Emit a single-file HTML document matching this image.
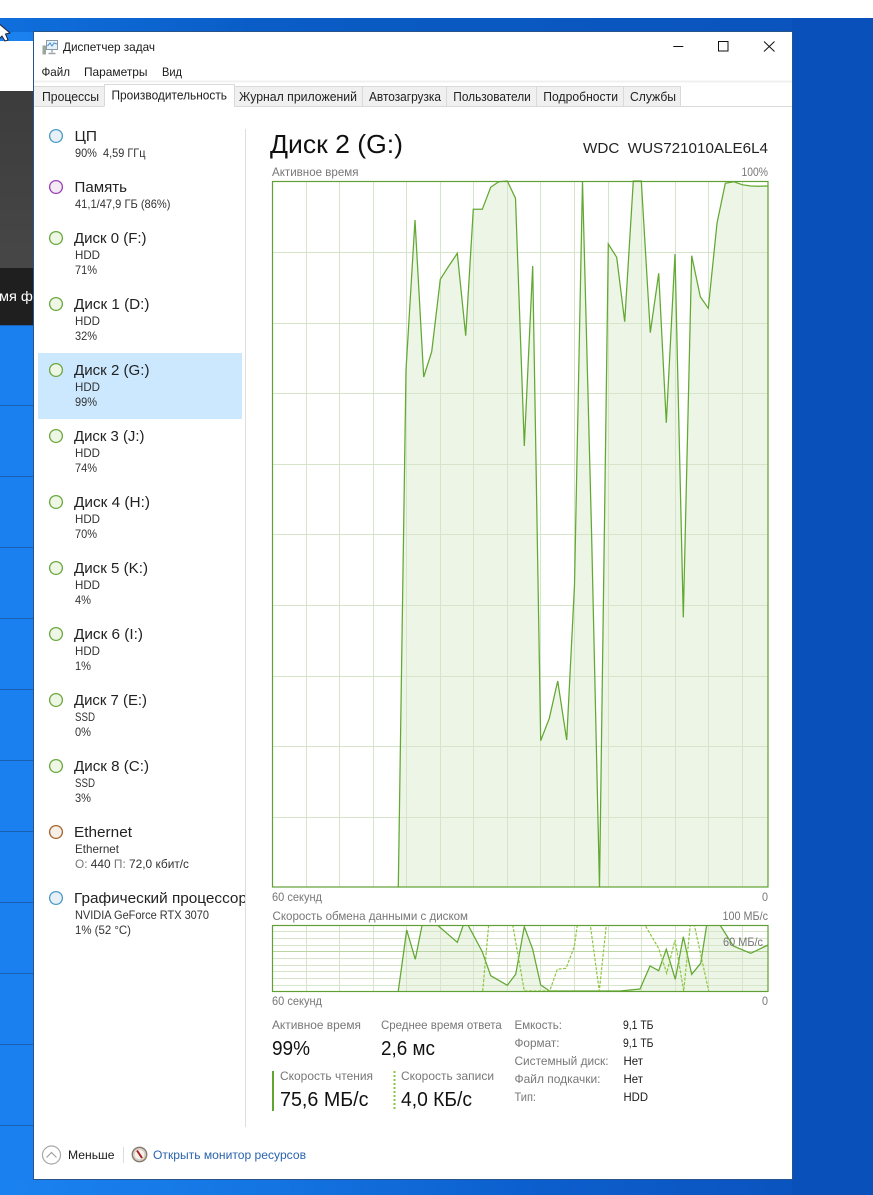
<!DOCTYPE html>
<html lang="ru"><head><meta charset="utf-8"><title>Диспетчер задач</title>
<style>
html,body{margin:0;padding:0;background:#fff;width:873px;height:1195px;overflow:hidden}
svg{display:block;position:absolute;left:0;top:0}
text{font-family:"Liberation Sans",sans-serif;white-space:pre;fill:#1a1a1a;font-size:12px}
.g{fill:#777}
.n{font-size:14.5px;fill:#222}
.s{font-size:12px;fill:#333}
.b{font-size:20.5px;fill:#111}
.m{fill:#222;font-size:12.5px}
</style></head><body>
<svg width="873" height="1195" viewBox="0 0 873 1195" xmlns="http://www.w3.org/2000/svg">
<defs>
<linearGradient id="desk" x1="0" y1="0" x2="1" y2="0"><stop offset="0" stop-color="#1a82f0"/><stop offset=".3" stop-color="#1475e2"/><stop offset=".6" stop-color="#0c5fce"/><stop offset="1" stop-color="#0a50ba"/></linearGradient>
<linearGradient id="top" x1="0" y1="0" x2="1" y2="0"><stop offset="0" stop-color="#0f6fdc"/><stop offset=".3" stop-color="#0a5cc6"/><stop offset="1" stop-color="#0a52bb"/></linearGradient>
<linearGradient id="dk" x1="0" y1="0" x2="0" y2="1"><stop offset="0" stop-color="#3c3c3c"/><stop offset="1" stop-color="#474747"/></linearGradient>
<clipPath id="c2"><rect x="273" y="925.5" width="495" height="66"/></clipPath>
<clipPath id="cs"><rect x="38" y="880" width="207" height="40"/></clipPath>
</defs>

<!-- desktop -->
<rect width="873" height="1195" fill="#fff"/>
<rect y="18" width="873" height="1177" fill="url(#desk)"/>
<rect y="18" width="873" height="14" fill="url(#top)"/>
<rect x="792" y="18" width="81" height="1177" fill="#0a50ba"/>
<rect x="792" y="1180" width="81" height="15" fill="#0a50ba"/>
<!-- background app strip -->
<rect y="41" width="34" height="50" fill="#fff"/>
<rect y="91" width="34" height="177" fill="url(#dk)"/>
<rect y="268" width="34" height="57" fill="#1f1f1f"/>
<rect y="325" width="34" height="855" fill="#1a80f0"/>
<g stroke="#1a5fb0" stroke-width="1"><path d="M0 325.5H34M0 405.5H34M0 476.5H34M0 547.5H34M0 618.5H34M0 689.5H34M0 760.5H34M0 831.5H34M0 902.5H34M0 973.5H34M0 1044.5H34M0 1125.5H34"/></g>
<text x="-1" y="301" textLength="42" lengthAdjust="spacingAndGlyphs" style="fill:#fff;font-size:14px">мя фа</text>
<path d="M-3 22L10 33L5.5 34L8 40L5 41L2 36L-1 39Z" fill="#fff" stroke="#223" stroke-width="1"/>

<!-- window -->
<rect x="33.5" y="31.5" width="759" height="1148" fill="#fff" stroke="#27548a"/>

<!-- title bar -->
<g>
<rect x="42.5" y="45.5" width="3.5" height="9" fill="#9aa79a"/>
<rect x="46.5" y="40.5" width="11" height="9" fill="#e6f1fa" stroke="#8a9aa8"/>
<path d="M47.5 46L50 43L52 46L54 43L57 44" fill="none" stroke="#4a8ed0" stroke-width="1"/>
<path d="M52 50V52.5M48.5 53.5H55.5" stroke="#9aa6ae" stroke-width="1.4" fill="none"/>
</g>
<text x="63" y="51" textLength="92" lengthAdjust="spacingAndGlyphs" font-size="12">Диспетчер задач</text>
<path d="M673.3 46.5H683.3" stroke="#111" stroke-width="1"/>
<rect x="718.5" y="41.5" width="9.5" height="9.5" fill="none" stroke="#111"/>
<path d="M764 41.5L774.5 51.5M774.5 41.5L764 51.5" stroke="#111" stroke-width="1"/>

<!-- menu -->
<text x="41.5" y="76" textLength="28.5" lengthAdjust="spacingAndGlyphs">Файл</text>
<text x="84" y="76" textLength="63.5" lengthAdjust="spacingAndGlyphs">Параметры</text>
<text x="162" y="76" textLength="20" lengthAdjust="spacingAndGlyphs">Вид</text>
<rect x="34" y="80.5" width="758" height="2" fill="#f0f0f0"/>

<!-- tabs -->
<rect x="34" y="86" width="646" height="20" fill="#f0f0f0"/>
<g stroke="#d9d9d9" fill="none">
<path d="M34 86.5H680.5V106M362.5 86V106M446.5 86V106M536.5 86V106M623.5 86V106"/>
<path d="M34 106.5H792"/>
</g>
<rect x="104" y="84.5" width="130.5" height="23" fill="#fff"/>
<path d="M104.5 106.5V84.5H234.5V106.5" fill="none" stroke="#d9d9d9"/>
<text class="m" x="42" y="101" textLength="57" lengthAdjust="spacingAndGlyphs">Процессы</text>
<text class="m" x="111.5" y="99.5" textLength="115.5" lengthAdjust="spacingAndGlyphs">Производительность</text>
<text class="m" x="239" y="101" textLength="118" lengthAdjust="spacingAndGlyphs">Журнал приложений</text>
<text class="m" x="369" y="101" textLength="72" lengthAdjust="spacingAndGlyphs">Автозагрузка</text>
<text class="m" x="453.3" y="101" textLength="77.5" lengthAdjust="spacingAndGlyphs">Пользователи</text>
<text class="m" x="543.3" y="101" textLength="74.7" lengthAdjust="spacingAndGlyphs">Подробности</text>
<text class="m" x="630" y="101" textLength="46" lengthAdjust="spacingAndGlyphs">Службы</text>

<!-- sidebar -->
<rect x="38" y="353" width="204" height="66" fill="#cce8ff"/>
<path d="M245.5 129V1127" stroke="#dedede"/>
<g stroke-width="1.3">
<circle cx="56" cy="136" r="6.4" fill="#e6f0f6" stroke="#4c9ac6"/>
<circle cx="56" cy="187" r="6.4" fill="#f4eaf6" stroke="#9a3fb3"/>
<g fill="#eef6e6" stroke="#6aa83c">
<circle cx="56" cy="238" r="6.4"/><circle cx="56" cy="304" r="6.4"/><circle cx="56" cy="370" r="6.4"/><circle cx="56" cy="436" r="6.4"/><circle cx="56" cy="502" r="6.4"/><circle cx="56" cy="568" r="6.4"/><circle cx="56" cy="634" r="6.4"/><circle cx="56" cy="700" r="6.4"/><circle cx="56" cy="766" r="6.4"/>
</g>
<circle cx="56" cy="832" r="6.4" fill="#f6efe8" stroke="#a7622a"/>
<circle cx="56" cy="898" r="6.4" fill="#e6f0f6" stroke="#4c9ac6"/>
</g>

<text class="n" x="74.5" y="141" textLength="22.5" lengthAdjust="spacingAndGlyphs">ЦП</text>
<text class="s" x="75" y="157" textLength="70.5" lengthAdjust="spacingAndGlyphs">90%  4,59 ГГц</text>
<text class="n" x="74.5" y="192" textLength="52.5" lengthAdjust="spacingAndGlyphs">Память</text>
<text class="s" x="75" y="208" textLength="95.5" lengthAdjust="spacingAndGlyphs">41,1/47,9 ГБ (86%)</text>

<text class="n" x="74" y="243" textLength="72.5" lengthAdjust="spacingAndGlyphs">Диск 0 (F:)</text>
<text class="s" x="75" y="259" textLength="25" lengthAdjust="spacingAndGlyphs">HDD</text>
<text class="s" x="75" y="274" textLength="22" lengthAdjust="spacingAndGlyphs">71%</text>

<text class="n" x="74" y="309" textLength="75.5" lengthAdjust="spacingAndGlyphs">Диск 1 (D:)</text>
<text class="s" x="75" y="325" textLength="25" lengthAdjust="spacingAndGlyphs">HDD</text>
<text class="s" x="75" y="340" textLength="22" lengthAdjust="spacingAndGlyphs">32%</text>

<text class="n" x="74" y="375" textLength="75.5" lengthAdjust="spacingAndGlyphs">Диск 2 (G:)</text>
<text class="s" x="75" y="391" textLength="25" lengthAdjust="spacingAndGlyphs">HDD</text>
<text class="s" x="75" y="406" textLength="22" lengthAdjust="spacingAndGlyphs">99%</text>

<text class="n" x="74" y="441" textLength="70.5" lengthAdjust="spacingAndGlyphs">Диск 3 (J:)</text>
<text class="s" x="75" y="457" textLength="25" lengthAdjust="spacingAndGlyphs">HDD</text>
<text class="s" x="75" y="472" textLength="22" lengthAdjust="spacingAndGlyphs">74%</text>

<text class="n" x="74" y="507" textLength="76" lengthAdjust="spacingAndGlyphs">Диск 4 (H:)</text>
<text class="s" x="75" y="523" textLength="25" lengthAdjust="spacingAndGlyphs">HDD</text>
<text class="s" x="75" y="538" textLength="22" lengthAdjust="spacingAndGlyphs">70%</text>

<text class="n" x="74" y="573" textLength="74" lengthAdjust="spacingAndGlyphs">Диск 5 (K:)</text>
<text class="s" x="75" y="589" textLength="25" lengthAdjust="spacingAndGlyphs">HDD</text>
<text class="s" x="75" y="604" textLength="16" lengthAdjust="spacingAndGlyphs">4%</text>

<text class="n" x="74" y="639" textLength="69" lengthAdjust="spacingAndGlyphs">Диск 6 (I:)</text>
<text class="s" x="75" y="655" textLength="25" lengthAdjust="spacingAndGlyphs">HDD</text>
<text class="s" x="75" y="670" textLength="16" lengthAdjust="spacingAndGlyphs">1%</text>

<text class="n" x="74" y="705" textLength="73" lengthAdjust="spacingAndGlyphs">Диск 7 (E:)</text>
<text class="s" x="75" y="721" textLength="20" lengthAdjust="spacingAndGlyphs">SSD</text>
<text class="s" x="75" y="736" textLength="16" lengthAdjust="spacingAndGlyphs">0%</text>

<text class="n" x="74" y="771" textLength="75" lengthAdjust="spacingAndGlyphs">Диск 8 (C:)</text>
<text class="s" x="75" y="787" textLength="20" lengthAdjust="spacingAndGlyphs">SSD</text>
<text class="s" x="75" y="802" textLength="16" lengthAdjust="spacingAndGlyphs">3%</text>

<text class="n" x="74" y="837" textLength="58" lengthAdjust="spacingAndGlyphs">Ethernet</text>
<text class="s" x="75" y="853" textLength="44" lengthAdjust="spacingAndGlyphs">Ethernet</text>
<text class="s" x="75" y="868" textLength="114" lengthAdjust="spacingAndGlyphs"><tspan style="fill:#777">О:</tspan> 440 <tspan style="fill:#777">П:</tspan> 72,0 кбит/с</text>

<g clip-path="url(#cs)"><text class="n" x="74" y="903" textLength="173" lengthAdjust="spacingAndGlyphs">Графический процессор</text></g>
<text class="s" x="75" y="919" textLength="134" lengthAdjust="spacingAndGlyphs">NVIDIA GeForce RTX 3070</text>
<text class="s" x="75" y="934" textLength="56" lengthAdjust="spacingAndGlyphs">1% (52 °C)</text>

<!-- header -->
<text x="270" y="153" textLength="133" lengthAdjust="spacingAndGlyphs" style="font-size:26px;fill:#111">Диск 2 (G:)</text>
<text x="583" y="153" textLength="185" lengthAdjust="spacingAndGlyphs" style="font-size:15px;fill:#222">WDC  WUS721010ALE6L4</text>
<text class="g" x="272" y="176" textLength="86.5" lengthAdjust="spacingAndGlyphs" font-size="11">Активное время</text>
<text class="g" x="741.5" y="176" textLength="26.5" lengthAdjust="spacingAndGlyphs">100%</text>

<!-- main chart -->
<polygon fill="#ecf5e6" points="398.3,887 406,370 415,220 423.7,377 431.7,351.7 440.3,279.3 448.8,266 457.3,253.3 465.7,335.7 473.3,209.3 482.3,209.3 490.7,187.3 498.7,181.7 507.3,181 515.5,198.3 524.3,446 532.7,266 540.7,740.7 549.3,718.3 557.7,681 566.7,740 574.5,585 582.5,181 591.5,530 599.5,887 608.3,244 616.7,257.3 624.7,321.7 633.3,181 641.3,181 650.3,332.7 658.7,273.3 666.3,422.7 675,254 683.3,617.3 691.7,255.7 700.3,296.7 708.3,308.3 717,223.3 725.3,183.3 733.7,181.7 742,184.7 750.7,186 758.3,186.3 767.5,186 767.5,887"/>
<path stroke="#d6e5c9" fill="none" d="M306.5 181V887M339.5 181V887M373.5 181V887M406.5 181V887M440.5 181V887M473.5 181V887M507.5 181V887M540.5 181V887M574.5 181V887M608.5 181V887M641.5 181V887M675.5 181V887M708.5 181V887M742.5 181V887M273 252.5H768M273 323.5H768M273 393.5H768M273 464.5H768M273 534.5H768M273 605.5H768M273 676.5H768M273 746.5H768M273 817.5H768"/>
<polyline fill="none" stroke="#62a832" stroke-width="1.25" points="398.3,887 406,370 415,220 423.7,377 431.7,351.7 440.3,279.3 448.8,266 457.3,253.3 465.7,335.7 473.3,209.3 482.3,209.3 490.7,187.3 498.7,181.7 507.3,181 515.5,198.3 524.3,446 532.7,266 540.7,740.7 549.3,718.3 557.7,681 566.7,740 574.5,585 582.5,181 591.5,530 599.5,887 608.3,244 616.7,257.3 624.7,321.7 633.3,181 641.3,181 650.3,332.7 658.7,273.3 666.3,422.7 675,254 683.3,617.3 691.7,255.7 700.3,296.7 708.3,308.3 717,223.3 725.3,183.3 733.7,181.7 742,184.7 750.7,186 758.3,186.3 767.5,186"/>
<rect x="272.5" y="181.5" width="495.5" height="705.5" fill="none" stroke="#5f9f33" stroke-width="1.2"/>

<text class="g" x="272" y="901" textLength="50" lengthAdjust="spacingAndGlyphs">60 секунд</text>
<text class="g" x="762" y="901" textLength="6" lengthAdjust="spacingAndGlyphs">0</text>
<text class="g" x="272.5" y="920" textLength="195.5" lengthAdjust="spacingAndGlyphs">Скорость обмена данными с диском</text>
<text class="g" x="722.5" y="920" textLength="45.5" lengthAdjust="spacingAndGlyphs">100 МБ/с</text>

<!-- transfer chart -->
<g clip-path="url(#c2)">
<polygon fill="#ecf5e6" points="398.3,991 406.7,930 415.3,959.3 423.7,917 432,917 437.3,925 457.3,942.3 463.3,925 468,925 482.3,951.7 490.7,975.7 507.3,985.3 515.7,974.3 524.3,926.7 532.7,949.3 540.7,985 549.7,991 620,991 630,990 640,989 650,966 658.7,970.7 666.3,949.3 675.3,979.3 683.3,936.7 691.7,974.3 700.7,963.3 706.7,925 720,925 733.3,946 750.7,953.3 768,945 768,991"/>
<path stroke="#d6e5c9" fill="none" d="M306.5 925V991M339.5 925V991M373.5 925V991M406.5 925V991M440.5 925V991M473.5 925V991M507.5 925V991M540.5 925V991M574.5 925V991M608.5 925V991M641.5 925V991M675.5 925V991M708.5 925V991M742.5 925V991M273 931.5H768M273 938.5H768M273 945.5H768M273 958.5H768M273 965.5H768M273 971.5H768M273 978.5H768M273 985.5H768"/>
<path stroke="#b9d6a2" fill="none" d="M273 951.5H768"/>
<polyline fill="none" stroke="#62a832" stroke-width="1.25" points="398.3,991 406.7,930 415.3,959.3 423.7,917 432,917 437.3,925 457.3,942.3 463.3,925 468,925 482.3,951.7 490.7,975.7 507.3,985.3 515.7,974.3 524.3,926.7 532.7,949.3 540.7,985 549.7,991 620,991 630,990 640,989 650,966 658.7,970.7 666.3,949.3 675.3,979.3 683.3,936.7 691.7,974.3 700.7,963.3 706.7,925 720,925 733.3,946 750.7,953.3 768,945"/>
<polyline fill="none" stroke="#8ec63f" stroke-width="1.2" stroke-dasharray="3 1.5" points="482.7,991 488.7,925 512.7,925 524.3,991 549.7,991 557.3,969.3 566,968.3 574.3,946.7 577.3,925 590.3,925 599.3,991 606.3,925 645,925 653.3,939.3 658.7,948.3 666.7,973.3 675,940 683.7,991 690.3,925 694.3,925 708.7,991"/>
</g>
<rect x="272.5" y="925.5" width="495.5" height="66" fill="none" stroke="#5f9f33" stroke-width="1.2"/>
<text class="g" x="723" y="946" textLength="40" lengthAdjust="spacingAndGlyphs">60 МБ/с</text>
<text class="g" x="272" y="1005" textLength="50" lengthAdjust="spacingAndGlyphs">60 секунд</text>
<text class="g" x="762" y="1005" textLength="6" lengthAdjust="spacingAndGlyphs">0</text>

<!-- stats -->
<text class="g" x="272" y="1029" textLength="89" lengthAdjust="spacingAndGlyphs">Активное время</text>
<text class="g" x="381" y="1029" textLength="120.7" lengthAdjust="spacingAndGlyphs">Среднее время ответа</text>
<text class="b" x="272" y="1055" textLength="38" lengthAdjust="spacingAndGlyphs">99%</text>
<text class="b" x="381" y="1055" textLength="54" lengthAdjust="spacingAndGlyphs">2,6 мс</text>
<rect x="272" y="1071" width="2" height="40" fill="#5fa52e"/>
<path d="M394.5 1071V1111" stroke="#8ec63f" stroke-width="2" stroke-dasharray="2 2"/>
<text class="g" x="280" y="1080" textLength="93" lengthAdjust="spacingAndGlyphs">Скорость чтения</text>
<text class="b" x="280" y="1106" textLength="88.5" lengthAdjust="spacingAndGlyphs">75,6 МБ/с</text>
<text class="g" x="401" y="1080" textLength="93" lengthAdjust="spacingAndGlyphs">Скорость записи</text>
<text class="b" x="401" y="1106" textLength="71" lengthAdjust="spacingAndGlyphs">4,0 КБ/с</text>

<text class="g" x="514.5" y="1029" textLength="47.5" lengthAdjust="spacingAndGlyphs">Емкость:</text>
<text class="g" x="514.5" y="1047" textLength="45" lengthAdjust="spacingAndGlyphs">Формат:</text>
<text class="g" x="514.5" y="1065" textLength="94" lengthAdjust="spacingAndGlyphs">Системный диск:</text>
<text class="g" x="514.5" y="1083" textLength="86" lengthAdjust="spacingAndGlyphs">Файл подкачки:</text>
<text class="g" x="514.5" y="1101" textLength="21.5" lengthAdjust="spacingAndGlyphs">Тип:</text>
<text x="623" y="1029" textLength="30.5" lengthAdjust="spacingAndGlyphs">9,1 ТБ</text>
<text x="623" y="1047" textLength="30.5" lengthAdjust="spacingAndGlyphs">9,1 ТБ</text>
<text x="623.5" y="1065" textLength="19.5" lengthAdjust="spacingAndGlyphs">Нет</text>
<text x="623.5" y="1083" textLength="19.5" lengthAdjust="spacingAndGlyphs">Нет</text>
<text x="623.5" y="1101" textLength="24.5" lengthAdjust="spacingAndGlyphs">HDD</text>

<!-- footer -->
<circle cx="51.5" cy="1155" r="9" fill="#fff" stroke="#a8a8a8" stroke-width="1.2"/>
<path d="M46.5 1157.5L51.5 1152.5L56.5 1157.5" fill="none" stroke="#a0a0a0" stroke-width="1.2"/>
<text x="68" y="1159" textLength="46.5" lengthAdjust="spacingAndGlyphs">Меньше</text>
<path d="M123.5 1147V1163" stroke="#dcdcdc"/>
<circle cx="139.5" cy="1154.5" r="7.2" fill="#d9d0c4" stroke="#857a6e" stroke-width="1.4"/>
<circle cx="139.5" cy="1154.5" r="4.8" fill="#f6f3ee"/>
<path d="M137 1150.5L142 1158" stroke="#b01e1e" stroke-width="2"/>
<text x="153" y="1159" textLength="153" lengthAdjust="spacingAndGlyphs" style="fill:#2a63ae">Открыть монитор ресурсов</text>
</svg>
</body></html>
